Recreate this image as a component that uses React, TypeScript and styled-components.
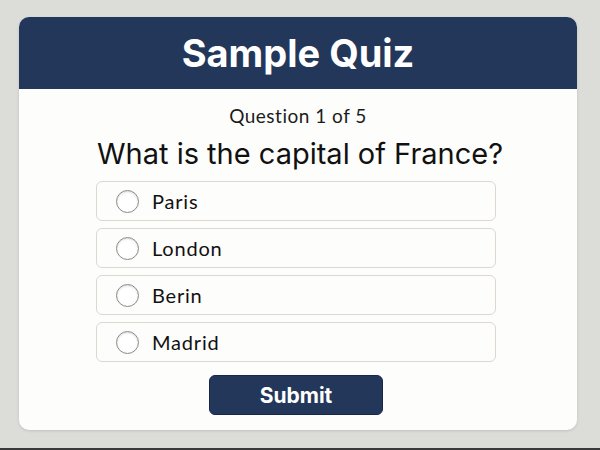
import React, { useState } from "react";
import styled, { createGlobalStyle } from "styled-components";

const GlobalStyle = createGlobalStyle`
  html, body {
    margin: 0;
    padding: 0;
    background: #dcdcd9;
    font-family: "Lato", "Noto Sans", sans-serif;
  }
`;

const Page = styled.div`
  width: 600px;
  height: 450px;
  box-sizing: border-box;
  padding: 17px 23px 20px 19px;
  border-bottom: 2px solid #3a3a3a;
`;

const Card = styled.div`
  height: 413px;
  background: #fdfdfb;
  border-radius: 10px;
  overflow: hidden;
  box-shadow: 0 1px 3px rgba(0, 0, 0, 0.12);
  display: flex;
  flex-direction: column;
`;

const Header = styled.div`
  height: 72px;
  background: #23375b;
  display: flex;
  align-items: center;
  justify-content: center;
`;

const Title = styled.h1`
  margin: 0;
  color: #ffffff;
  font-family: "Inter", "Noto Sans", sans-serif;
  font-weight: 700;
  font-size: 38px;
`;

const Body = styled.div`
  display: flex;
  flex-direction: column;
  align-items: center;
  padding-top: 16px;
`;

const Counter = styled.div`
  font-size: 19px;
  color: #1c1c1c;
  line-height: 22px;
  letter-spacing: 0.5px;
`;

const Question = styled.h2`
  margin: 9px 0 9px;
  font-weight: 400;
  font-size: 29px;
  line-height: 36px;
  color: #111;
  font-family: "Inter", "Noto Sans", sans-serif;
  margin-left: 4px;
`;

const Options = styled.div`
  display: flex;
  flex-direction: column;
  gap: 7px;
  width: 400px;
  margin-left: -4px;
`;

const Option = styled.label`
  height: 40px;
  box-sizing: border-box;
  border: 1.5px solid #dcd8d0;
  border-radius: 6px;
  background: #fdfdfb;
  display: flex;
  align-items: center;
  padding-left: 19px;
  gap: 13px;
  cursor: pointer;
`;

const Radio = styled.span<{ $checked: boolean }>`
  width: 23px;
  height: 23px;
  box-sizing: border-box;
  border-radius: 50%;
  border: 1.5px solid #8a8a8a;
  background: ${(p) => (p.$checked ? "radial-gradient(#23375b 40%, #fff 45%)" : "#fff")};
  box-shadow: inset 0 1px 2px rgba(0, 0, 0, 0.15);
`;

const OptionText = styled.span`
  font-size: 20px;
  color: #111;
  letter-spacing: 0.8px;
`;

const Submit = styled.button`
  margin-top: 13px;
  width: 174px;
  height: 40px;
  border: 1px solid #17264a;
  border-radius: 6px;
  background: #23375b;
  color: #fff;
  font-family: "Inter", "Noto Sans", sans-serif;
  font-weight: 700;
  font-size: 21px;
  cursor: pointer;
  margin-left: -4px;
`;

const answers = ["Paris", "London", "Berin", "Madrid"];

export default function App() {
  const [picked, setPicked] = useState<number | null>(null);
  return (
    <>
      <GlobalStyle />
      <Page>
        <Card>
          <Header>
            <Title>Sample Quiz</Title>
          </Header>
          <Body>
            <Counter>Question 1 of 5</Counter>
            <Question>What is the capital of France?</Question>
            <Options>
              {answers.map((a, i) => (
                <Option key={a} onClick={() => setPicked(i)}>
                  <Radio $checked={picked === i} />
                  <OptionText>{a}</OptionText>
                </Option>
              ))}
            </Options>
            <Submit>Submit</Submit>
          </Body>
        </Card>
      </Page>
    </>
  );
}
